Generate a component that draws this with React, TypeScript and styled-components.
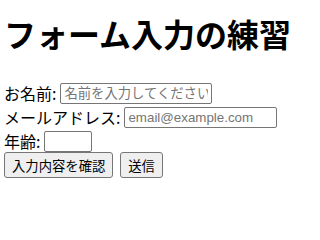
import styled, { createGlobalStyle } from "styled-components";

const GlobalStyle = createGlobalStyle`
  body {
    margin: 0;
    padding: 0 4px;
    background: #fff;
    color: #000;
    font-family: "Noto Sans CJK JP", "Noto Sans", sans-serif;
    font-size: 16px;
  }
`;

const Title = styled.h1`
  font-size: 32px;
  font-weight: 700;
  margin: 10px 0 25px;
  line-height: normal;
`;

const Form = styled.form`
  display: flex;
  flex-direction: column;
`;

const Row = styled.div`
  display: flex;
  align-items: center;
  gap: 4px;
  height: 24px;
`;

const Label = styled.label`
  white-space: nowrap;
`;

const Input = styled.input<{ $width: number }>`
  box-sizing: border-box;
  width: ${(p) => p.$width}px;
  height: 21px;
  padding: 1px 3px;
  border: 1px solid #767676;
  border-radius: 2px;
  font-family: "Liberation Sans", "Noto Sans CJK JP", sans-serif;
  font-size: 13.33px;
  color: #000;
  &::placeholder {
    color: #757575;
    font-family: "Noto Sans CJK JP", sans-serif;
  }
  &[type="email"]::placeholder {
    font-family: "Liberation Sans", sans-serif;
  }
`;

const Buttons = styled.div`
  display: flex;
  gap: 7px;
  margin-top: -1px;
`;

const Button = styled.button`
  height: 26px;
  padding: 0 7px;
  background: #efefef;
  border: 1px solid #767676;
  border-radius: 3px;
  font-family: "Noto Sans CJK JP", sans-serif;
  font-size: 13.33px;
  color: #000;
`;

export default function App() {
  return (
    <>
      <GlobalStyle />
      <Title>フォーム入力の練習</Title>
      <Form onSubmit={(e) => e.preventDefault()}>
        <Row>
          <Label htmlFor="name">お名前:</Label>
          <Input id="name" type="text" placeholder="名前を入力してください" $width={152} />
        </Row>
        <Row>
          <Label htmlFor="email">メールアドレス:</Label>
          <Input id="email" type="email" placeholder="email@example.com" $width={153} />
        </Row>
        <Row>
          <Label htmlFor="age">年齢:</Label>
          <Input id="age" type="number" $width={48} />
        </Row>
        <Buttons>
          <Button type="button">入力内容を確認</Button>
          <Button type="submit">送信</Button>
        </Buttons>
      </Form>
    </>
  );
}
